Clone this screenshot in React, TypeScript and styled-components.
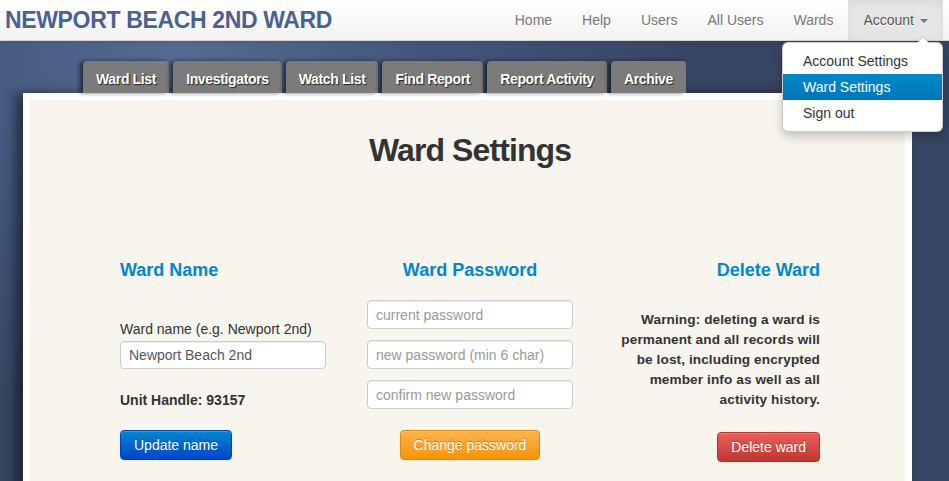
import React from 'react';
import styled, { createGlobalStyle } from 'styled-components';

const GlobalStyle = createGlobalStyle`
  html, body {
    margin: 0;
    padding: 0;
    height: 100%;
    overflow: hidden;
  }
  body {
    font-family: "Liberation Sans", Arial, sans-serif;
    font-size: 14px;
    color: #333;
    background: #36445f;
  }
`;

const Page = styled.div`
  min-height: 481px;
  background: radial-gradient(ellipse 520px 360px at 180px 60px, #566b93 0%, #44567b 45%, #374562 100%);
`;

const NavBar = styled.div`
  position: relative;
  z-index: 5;
  height: 40px;
  display: flex;
  align-items: center;
  justify-content: space-between;
  background: linear-gradient(#ffffff, #f2f2f2);
  border-bottom: 1px solid #d4d4d4;
  box-shadow: 0 1px 4px rgba(0, 0, 0, 0.1);
`;

const Brand = styled.div`
  padding-left: 5px;
  font-size: 23px;
  font-weight: bold;
  letter-spacing: -0.35px;
  color: #4b6190;
  text-shadow: 0 1px 0 #fff;
`;

const NavList = styled.ul`
  list-style: none;
  margin: 0 6px 0 0;
  padding: 0;
  display: flex;
  height: 40px;
`;

const NavItem = styled.li<{ $active?: boolean }>`
  position: relative;
  display: flex;
  align-items: center;
  padding: 0 15px;
  height: 40px;
  color: ${(p) => (p.$active ? '#555' : '#777')};
  background: ${(p) => (p.$active ? '#e5e5e5' : 'transparent')};
  box-shadow: ${(p) => (p.$active ? 'inset 0 3px 8px rgba(0,0,0,0.05)' : 'none')};
  text-shadow: 0 1px 0 #fff;
`;

const Caret = styled.span`
  display: inline-block;
  margin-left: 6px;
  margin-top: 2px;
  border-top: 4px solid #777;
  border-left: 4px solid transparent;
  border-right: 4px solid transparent;
`;

const Dropdown = styled.ul`
  position: absolute;
  top: 42px;
  right: 0;
  width: 161px;
  margin: 0;
  padding: 5px 0;
  list-style: none;
  background: #fff;
  border: 1px solid rgba(0, 0, 0, 0.2);
  border-radius: 6px;
  box-shadow: 0 5px 10px rgba(0, 0, 0, 0.2);
  box-sizing: border-box;

  &::before {
    content: '';
    position: absolute;
    top: -7px;
    right: 12px;
    border-left: 7px solid transparent;
    border-right: 7px solid transparent;
    border-bottom: 7px solid rgba(0, 0, 0, 0.2);
  }
  &::after {
    content: '';
    position: absolute;
    top: -6px;
    right: 13px;
    border-left: 6px solid transparent;
    border-right: 6px solid transparent;
    border-bottom: 6px solid #fff;
  }
`;

const DropItem = styled.li<{ $selected?: boolean }>`
  padding: 3px 20px;
  line-height: 20px;
  white-space: nowrap;
  text-shadow: none;
  color: ${(p) => (p.$selected ? '#fff' : '#333')};
  background: ${(p) => (p.$selected ? 'linear-gradient(#0088cc, #0077b3)' : 'transparent')};
`;

const Main = styled.div`
  padding: 20px 0 0 23px;
`;

const Tabs = styled.div`
  display: flex;
  gap: 4px;
  margin-left: 60px;
  height: 32px;
`;

const Tab = styled.div`
  display: flex;
  align-items: center;
  padding: 3px 13px 0;
  height: 32px;
  box-sizing: border-box;
  background: #7b7b7b;
  border-radius: 4px 4px 0 0;
  color: #fff;
  font-weight: bold;
  font-size: 14px;
  letter-spacing: -0.35px;
  text-shadow: 1px 1px 1px #222;
  box-shadow: -3px 0 4px rgba(0, 0, 0, 0.55);
`;

const Panel = styled.div`
  width: 889px;
  box-sizing: border-box;
  padding: 7px;
  background: #fff;
  box-shadow: -8px 0 10px rgba(0, 0, 0, 0.45);
`;

const Inner = styled.div`
  background: linear-gradient(#f8f5ee 70%, #f7f4e9);
  padding: 30px 85px 30px 90px;
  min-height: 400px;
`;

const Title = styled.h1`
  margin: 0;
  text-align: center;
  font-size: 32px;
  line-height: 40px;
  font-weight: bold;
  color: #333;
  letter-spacing: -0.9px;
`;

const Columns = styled.div`
  display: grid;
  grid-template-columns: 206px 206px 206px;
  column-gap: 41px;
  margin-top: 89px;
`;

const Column = styled.div<{ $align: 'left' | 'center' | 'right' }>`
  display: flex;
  flex-direction: column;
  align-items: ${(p) => (p.$align === 'left' ? 'flex-start' : p.$align === 'right' ? 'flex-end' : 'center')};
  text-align: ${(p) => p.$align};
`;

const Heading = styled.h3<{ $after: number }>`
  margin: 0 0 ${(p) => p.$after}px;
  font-size: 18px;
  line-height: 22px;
  font-weight: bold;
  color: #0088cc;
`;

const Label = styled.div`
  line-height: 20px;
  color: #333;
`;

const Input = styled.input<{ $after?: number }>`
  width: 206px;
  height: 29px;
  box-sizing: border-box;
  margin: 0 0 ${(p) => p.$after ?? 0}px;
  padding: 4px 8px;
  font-family: "Liberation Sans", Arial, sans-serif;
  font-size: 14px;
  color: #555;
  background: #fff;
  border: 1px solid #ccc;
  border-radius: 4px;
  box-shadow: inset 0 1px 1px rgba(0, 0, 0, 0.075);
  &::placeholder {
    color: #999;
  }
`;

const Strong = styled.div<{ $top: number }>`
  margin-top: ${(p) => p.$top}px;
  font-weight: bold;
  line-height: 20px;
  color: #333;
`;

const Warning = styled.div`
  white-space: nowrap;
  font-size: 13.6px;
  font-weight: bold;
  line-height: 20px;
  letter-spacing: 0.1px;
  color: #333;
`;

const variants = {
  primary: { from: '#0088cc', to: '#0044cc', border: '#0044b3' },
  warning: { from: '#fbb450', to: '#f89406', border: '#e08a0a' },
  danger: { from: '#ee5f5b', to: '#bd362f', border: '#b0342e' },
};

const Button = styled.button<{ $variant: keyof typeof variants; $top: number }>`
  margin-top: ${(p) => p.$top}px;
  height: 30px;
  padding: 0 13px;
  font-family: "Liberation Sans", Arial, sans-serif;
  font-size: 14px;
  color: #fff;
  text-shadow: 0 -1px 0 rgba(0, 0, 0, 0.25);
  background: linear-gradient(${(p) => variants[p.$variant].from}, ${(p) => variants[p.$variant].to});
  border: 1px solid ${(p) => variants[p.$variant].border};
  border-radius: 4px;
  box-shadow: inset 0 1px 0 rgba(255, 255, 255, 0.2), 0 1px 2px rgba(0, 0, 0, 0.05);
`;

const navLinks = ['Home', 'Help', 'Users', 'All Users', 'Wards'];
const tabs = ['Ward List', 'Investigators', 'Watch List', 'Find Report', 'Report Activity', 'Archive'];

export default function App() {
  return (
    <Page>
      <GlobalStyle />
      <NavBar>
        <Brand>NEWPORT BEACH 2ND WARD</Brand>
        <NavList>
          {navLinks.map((l) => (
            <NavItem key={l}>{l}</NavItem>
          ))}
          <NavItem $active>
            Account
            <Caret />
            <Dropdown>
              <DropItem>Account Settings</DropItem>
              <DropItem $selected>Ward Settings</DropItem>
              <DropItem>Sign out</DropItem>
            </Dropdown>
          </NavItem>
        </NavList>
      </NavBar>
      <Main>
        <Tabs>
          {tabs.map((t) => (
            <Tab key={t}>{t}</Tab>
          ))}
        </Tabs>
        <Panel>
          <Inner>
            <Title>Ward Settings</Title>
            <Columns>
              <Column $align="left">
                <Heading $after={38}>Ward Name</Heading>
                <Label>Ward name (e.g. Newport 2nd)</Label>
                <Input defaultValue="Newport Beach 2nd" style={{ marginTop: 2, height: 28 }} />
                <Strong $top={21}>Unit Handle: 93157</Strong>
                <Button $variant="primary" $top={20}>Update name</Button>
              </Column>
              <Column $align="center">
                <Heading $after={19}>Ward Password</Heading>
                <Input placeholder="current password" $after={11} />
                <Input placeholder="new password (min 6 char)" $after={11} />
                <Input placeholder="confirm new password" />
                <Button $variant="warning" $top={21}>Change password</Button>
              </Column>
              <Column $align="right">
                <Heading $after={29}>Delete Ward</Heading>
                <Warning>
                  Warning: deleting a ward is
                  <br />
                  permanent and all records will
                  <br />
                  be lost, including encrypted
                  <br />
                  member info as well as all
                  <br />
                  activity history.
                </Warning>
                <Button $variant="danger" $top={22}>Delete ward</Button>
              </Column>
            </Columns>
          </Inner>
        </Panel>
      </Main>
    </Page>
  );
}
